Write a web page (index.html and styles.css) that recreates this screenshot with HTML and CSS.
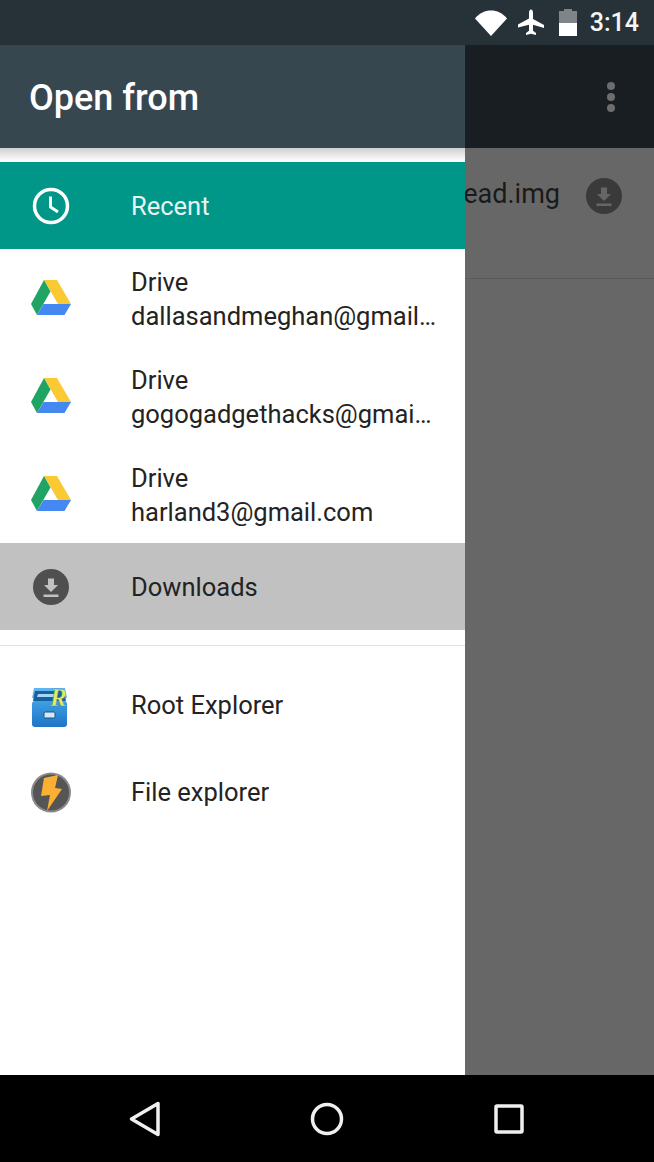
FILE: index.html
```html
<!DOCTYPE html>
<html lang="en">
<head>
<meta charset="utf-8">
<title>Open from</title>
<link rel="stylesheet" href="styles.css">
</head>
<body>
<div class="screen">
  <header class="status">
    <svg class="wifi" width="32" height="26" viewBox="0 0 32 26"><path class="white" d="M0 8.500C4.500 3 10 .5 16 .5S27.500 3 32 8.500L16 26z"/></svg>
    <svg class="plane" width="26" height="28" viewBox="0 0 26 28"><path class="white" d="M13 0.500c1.200 0 2 1.500 2 3.500v6l11 6v3l-11-3.200v6l3 2.200v2l-5-1.300-5 1.300v-2l3-2.200v-6L0 18.500v-3l11-6V4c0-2 .8-3.500 2-3.500z"/></svg>
    <svg class="battery" width="18" height="27" viewBox="0 0 18 27"><path class="batt-empty" d="M5 0h8v2h5v12H0V2h5z"/><rect class="white" y="14" width="18" height="13"/></svg>
    <span class="clock">3:14</span>
  </header>

  <main class="stage">
    <div class="behind">
      <div class="toolbar">
        <div class="dots"><i></i><i></i><i></i></div>
      </div>
      <div class="file-row">
        <span class="file-name">ead.img</span>
        <svg class="file-icon" width="36" height="36" viewBox="0 0 36 36"><circle class="back-disc" cx="18" cy="18" r="18"/><path class="back-glyph" d="M15 9.500h6v6.500h4l-7 7-7-7h4zM10.500 25.500h15v2.500h-15z"/></svg>
      </div>
    </div>

    <nav class="drawer">
      <div class="drawer-head">Open from</div>
      <div class="head-shadow"></div>
      <div class="item item-active">
        <span class="icon"><svg width="38" height="38" viewBox="0 0 38 38"><circle class="clock-ring" cx="19" cy="19" r="16.500"/><path class="clock-hand" d="M18.500 9.500V20l7.500 5"/></svg></span>
        <span class="label">Recent</span>
      </div>
      <div class="item item-two">
        <span class="icon"><svg class="drive" width="42" height="38" viewBox="0 0 42 38"><path class="dr-yellow" d="M14 1h13l14 24H28z"/><path class="dr-green" d="M14 1l6.500 11.500L7 36 1 25z"/><path class="dr-blue" d="M13.500 25H41l-6.500 11H7z"/></svg></span>
        <span class="label"><span class="line">Drive</span><span class="line">dallasandmeghan@gmail…</span></span>
      </div>
      <div class="item item-two">
        <span class="icon"><svg class="drive" width="42" height="38" viewBox="0 0 42 38"><path class="dr-yellow" d="M14 1h13l14 24H28z"/><path class="dr-green" d="M14 1l6.500 11.500L7 36 1 25z"/><path class="dr-blue" d="M13.500 25H41l-6.500 11H7z"/></svg></span>
        <span class="label"><span class="line">Drive</span><span class="line">gogogadgethacks@gmai…</span></span>
      </div>
      <div class="item item-two">
        <span class="icon"><svg class="drive" width="42" height="38" viewBox="0 0 42 38"><path class="dr-yellow" d="M14 1h13l14 24H28z"/><path class="dr-green" d="M14 1l6.500 11.500L7 36 1 25z"/><path class="dr-blue" d="M13.500 25H41l-6.500 11H7z"/></svg></span>
        <span class="label"><span class="line">Drive</span><span class="line">harland3@gmail.com</span></span>
      </div>
      <div class="item item-selected">
        <span class="icon"><svg width="36" height="36" viewBox="0 0 36 36"><circle class="dl-disc" cx="18" cy="18" r="18"/><path class="dl-glyph" d="M15 9.500h6v6.500h4l-7 7-7-7h4zM10.500 25.500h15v2.500h-15z"/></svg></span>
        <span class="label">Downloads</span>
      </div>
      <hr class="divider">
      <div class="item item-app">
        <span class="icon"><svg width="42" height="50" viewBox="0 0 42 50"><defs><linearGradient id="reBody" x1="0" y1="0" x2="0" y2="1"><stop offset="0" stop-color="#3f9fe4"/><stop offset="1" stop-color="#1f74c4"/></linearGradient></defs><path class="re-top" d="M3 7h31l2 10H1z"/><path class="re-slot" d="M4 10h29l2 10H2z"/><path class="re-stripe" d="M7 13h18l1 3H6z"/><rect class="re-body" x="1" y="20" width="35" height="26" rx="3"/><rect class="re-handle" x="13" y="31" width="11" height="6" rx="1.500"/><text class="re-r" x="19" y="25">R</text></svg></span>
        <span class="label">Root Explorer</span>
      </div>
      <div class="item item-app">
        <span class="icon"><svg width="40" height="41" viewBox="0 0 40 41"><circle class="fe-rim" cx="20" cy="20.500" r="20"/><circle class="fe-disc" cx="20" cy="20.500" r="18"/><path class="fe-bolt" d="M13 6L27 3 24 16 31 17 16 39 19 23 10 24z"/></svg></span>
        <span class="label">File explorer</span>
      </div>
    </nav>
  </main>

  <footer class="navbar">
    <svg width="34" height="36" viewBox="0 0 34 36"><path class="nav-stroke" d="M29 2.500v31L2.500 18z"/></svg>
    <svg width="34" height="34" viewBox="0 0 34 34"><circle class="nav-stroke" cx="17" cy="17" r="14.500"/></svg>
    <svg class="nav-square" width="32" height="32" viewBox="0 0 32 32"><rect class="nav-stroke" x="3" y="3" width="26" height="26" rx="1"/></svg>
  </footer>
</div>
</body>
</html>
```

FILE: styles.css
```css
* { box-sizing: border-box; }
html, body { margin: 0; padding: 0; }
body { width: 654px; height: 1162px; overflow: hidden; font-family: Roboto, "Liberation Sans", sans-serif; }
svg { display: block; flex: none; }
.white { fill: #fff; }

.screen { width: 654px; height: 1162px; display: flex; flex-direction: column; }

.status { height: 45px; flex: none; background: #263238; display: flex; align-items: center; justify-content: flex-end; padding-right: 15px; }
.wifi { margin-right: 11px; }
.plane { margin-right: 15px; }
.batt-empty { fill: #7e8488; }
.battery { margin-right: 13px; }
.clock { color: #f4f5f5; font-size: 25px; font-weight: 500; line-height: 45px; }

.stage { flex: 1; position: relative; background: #676767; overflow: hidden; }
.behind { height: 100%; display: flex; flex-direction: column; }
.toolbar { height: 103px; flex: none; background: #191e22; display: flex; justify-content: flex-end; align-items: center; padding-right: 39px; }
.dots { display: flex; flex-direction: column; gap: 3px; }
.dots i { display: block; width: 8px; height: 8px; border-radius: 50%; background: #6b6d6f; }
.file-row { height: 131px; flex: none; border-bottom: 1px solid #5a5a5a; display: flex; justify-content: flex-end; align-items: flex-start; padding: 29px 32px 0 0; }
.file-name { color: #1a1a1a; font-size: 27px; line-height: 34px; margin-right: 26px; }
.file-icon { margin-top: 1px; }
.back-disc { fill: #3a3a3a; }
.back-glyph { fill: #666; }

.drawer { position: absolute; left: 0; top: 0; bottom: 0; width: 465px; background: #fff; display: flex; flex-direction: column; }
.drawer-head { height: 103px; flex: none; background: #37474f; color: #fff; font-size: 36px; font-weight: 500; line-height: 106px; padding-left: 29px; }
.head-shadow { height: 14px; flex: none; background: linear-gradient(#cfcfcf, #f7f7f7 80%, #fff); }

.item { display: flex; align-items: center; height: 87px; flex: none; color: #232323; font-size: 25.500px; }
.item-active { height: 87px; background: #009688; color: #e6f4f2; }
.item-two { height: 98px; }
.item-selected { height: 87px; background: #c1c1c1; }
.icon { width: 131px; flex: none; display: flex; justify-content: flex-start; padding-left: 32px; }
.item-two .icon { padding-left: 30px; }
.item-selected .icon { padding-left: 33px; }
.item-app .icon { padding-left: 31px; }
.label { display: flex; flex-direction: column; white-space: nowrap; }
.item-two .label { padding-top: 2px; }
.item-app .label { padding-bottom: 2px; }
.line { line-height: 34px; }

.clock-ring, .clock-hand { fill: none; stroke: #fff; stroke-width: 3.500; }
.clock-hand { stroke-width: 3; }

.dr-yellow { fill: #fbc934; }
.dr-green { fill: #1fa463; }
.dr-blue { fill: #4688f1; }

.dl-disc { fill: #4f4f4f; }
.dl-glyph { fill: #c1c1c1; }

.divider { margin: 15px 0 16px; border: 0; height: 1px; background: #e2e2e2; flex: none; }

.re-body { fill: url(#reBody); }
.re-top { fill: #5db4ee; }
.re-slot { fill: #17609c; }
.re-stripe { fill: #a5d6f5; }
.re-handle { fill: #d6e9f7; stroke: #14558c; stroke-width: 1; }
.re-r { fill: #e6ec5e; stroke: #3d7f9e; stroke-width: 0.400; font-family: "Liberation Serif", serif; font-style: italic; font-weight: 700; font-size: 25px; }

.fe-rim { fill: #8a8a8a; }
.fe-disc { fill: #555; }
.fe-bolt { fill: #fbb034; }

.navbar { height: 87px; flex: none; background: #000; display: flex; align-items: center; gap: 147px; padding-left: 129px; }
.nav-square { margin-left: 2px; }
.nav-stroke { fill: none; stroke: #f0f0f0; stroke-width: 3.500; stroke-linejoin: round; }
```
